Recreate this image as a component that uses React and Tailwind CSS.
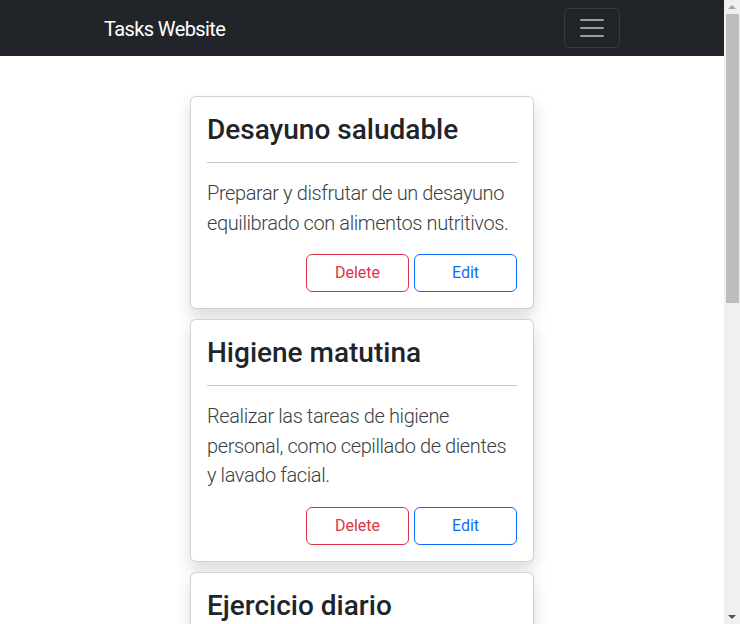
import React from 'react';

const tasks = [
  {
    title: 'Desayuno saludable',
    description: 'Preparar y disfrutar de un desayuno equilibrado con alimentos nutritivos.',
  },
  {
    title: 'Higiene matutina',
    description: 'Realizar las tareas de higiene personal, como cepillado de dientes y lavado facial.',
  },
  {
    title: 'Ejercicio diario',
    description: 'Dedicar al menos 30 minutos a realizar alguna actividad física.',
  },
  {
    title: 'Lectura',
    description: 'Leer un capítulo de un libro interesante antes de dormir.',
  },
  {
    title: 'Planificar la semana',
    description: 'Organizar las tareas y compromisos de los próximos días.',
  },
];

function TaskCard({ task }) {
  return (
    <div className="w-[344px] shrink-0 bg-white border border-black/[0.175] rounded-md shadow-[0_8px_16px_rgba(0,0,0,0.15)] p-4">
      <h2 className="text-[28px] leading-[33px] font-medium text-[#212529]">{task.title}</h2>
      <hr className="my-4 border-0 border-t border-[#212529] opacity-25" />
      <p className="text-xl leading-[29.5px] font-light tracking-[-0.4px] text-[#3a3f44] mb-4">
        {task.description}
      </p>
      <div className="flex justify-end gap-[5px]">
        <button className="w-[103px] h-[38px] border border-[#dc3545] text-[#dc3545] rounded-md text-base">
          Delete
        </button>
        <button className="w-[103px] h-[38px] border border-[#0d6efd] text-[#0d6efd] rounded-md text-base">
          Edit
        </button>
      </div>
    </div>
  );
}

function Scrollbar() {
  return (
    <div className="w-4 shrink-0 bg-[#f0f0f0] flex flex-col items-center">
      <div className="h-[14px] flex items-center justify-center">
        <div className="w-0 h-0 border-x-4 border-x-transparent border-b-4 border-b-[#a3a3a3]" />
      </div>
      <div className="w-[13px] h-[289px] bg-[#bdbdbd]" />
      <div className="flex-1" />
      <div className="h-[14px] flex items-center justify-center">
        <div className="w-0 h-0 border-x-4 border-x-transparent border-t-4 border-t-[#505050]" />
      </div>
    </div>
  );
}

export default function App() {
  return (
    <div className="h-screen flex overflow-hidden bg-white font-['Roboto',sans-serif]">
      <div className="flex-1 flex flex-col overflow-hidden">
        {/* Navbar */}
        <nav className="bg-[#212529] h-14 shrink-0">
          <div className="max-w-[540px] mx-auto px-3 h-full flex items-center justify-between">
            <span className="text-white text-xl tracking-[-0.6px] pt-[2px]">Tasks Website</span>
            <button className="w-14 h-10 border border-white/10 rounded-md flex items-center justify-center">
              <svg width="30" height="30" viewBox="0 0 30 30">
                <path
                  stroke="rgba(255,255,255,0.55)"
                  strokeLinecap="round"
                  strokeMiterlimit="10"
                  strokeWidth="2"
                  d="M4 7h22M4 15h22M4 23h22"
                />
              </svg>
            </button>
          </div>
        </nav>

        {/* Task list */}
        <main className="pt-10 pb-10 flex flex-col items-center gap-[10px]">
          {tasks.map((task) => (
            <TaskCard key={task.title} task={task} />
          ))}
        </main>
      </div>
      <Scrollbar />
    </div>
  );
}
